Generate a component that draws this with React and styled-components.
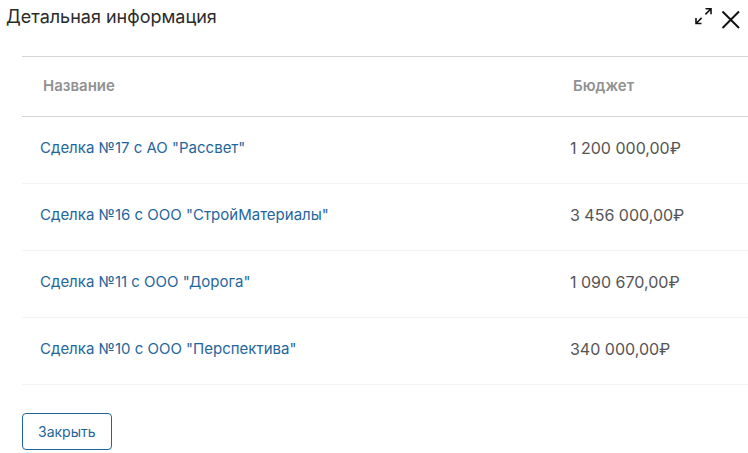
import React from "react";
import styled, { createGlobalStyle } from "styled-components";

const Global = createGlobalStyle`
  * { box-sizing: border-box; }
  body { margin: 0; background: #fff; font-family: Inter, "Liberation Sans", sans-serif; }
`;

const Dialog = styled.section`
  width: 100%;
`;

const Header = styled.header`
  display: flex;
  justify-content: space-between;
  align-items: flex-start;
  padding: 5px 7px 21px 6px;
`;

const Title = styled.h1`
  margin: 0;
  font-size: 18px;
  line-height: 24px;
  font-weight: 400;
  color: #2b2b2b;
`;

const Actions = styled.div`
  display: flex;
  gap: 8px;
`;

const IconButton = styled.button`
  display: flex;
  padding: 0;
  border: 0;
  background: none;
  color: #111;
  cursor: pointer;
`;

const Content = styled.div`
  padding-left: 22px;
`;

const Table = styled.table`
  width: 100%;
  border-collapse: separate;
  border-spacing: 0;
  table-layout: fixed;
`;

const HeadCell = styled.th`
  width: ${(p) => p.$width || "auto"};
  height: 61px;
  padding: 0 21px 2px;
  border-top: 1px solid #d5d5d5;
  border-bottom: 1px solid #d5d5d5;
  text-align: left;
  font-size: 15px;
  font-weight: 600;
  color: #919191;
`;

const Cell = styled.td`
  height: 67px;
  padding: 0 18px 5px;
  border-bottom: 1px solid #f3f3f3;
  font-size: ${(p) => p.$size};
  color: #555;
`;

const DealLink = styled.a`
  color: #1f669c;
  text-decoration: none;
`;

const CloseButton = styled.button`
  margin-top: 28px;
  height: 37px;
  padding: 0 15px;
  border: 1px solid #1f669c;
  border-radius: 4px;
  background: #fff;
  color: #1f669c;
  font: 400 14px Inter, "Liberation Sans", sans-serif;
  cursor: pointer;
`;

const deals = [
  ['Сделка №17 с АО "Рассвет"', "1 200 000,00₽"],
  ['Сделка №16 с ООО "СтройМатериалы"', "3 456 000,00₽"],
  ['Сделка №11 с ООО "Дорога"', "1 090 670,00₽"],
  ['Сделка №10 с ООО "Перспектива"', "340 000,00₽"],
];

export default function App() {
  return (
    <Dialog aria-labelledby="title">
      <Global />
      <Header>
        <Title id="title">Детальная информация</Title>
        <Actions>
          <IconButton type="button" aria-label="Развернуть">
            <svg width="20" height="24" viewBox="0 0 20 24" fill="none" stroke="currentColor" strokeWidth="1.6">
              <path d="M12.5 3.8h5.5v5.5M18 3.8l-5.6 5.6M3 13v5.5h5.5M3 18.5l5.6-5.6" />
            </svg>
          </IconButton>
          <IconButton type="button" aria-label="Закрыть окно">
            <svg width="20" height="30" viewBox="0 0 20 30" fill="none" stroke="currentColor" strokeWidth="2">
              <path d="M1.5 6.5l16.5 16.5M18 6.5L1.5 23" />
            </svg>
          </IconButton>
        </Actions>
      </Header>
      <Content>
        <Table>
          <thead>
            <tr>
              <HeadCell scope="col">Название</HeadCell>
              <HeadCell scope="col" $width="27%">Бюджет</HeadCell>
            </tr>
          </thead>
          <tbody>
            {deals.map(([name, budget]) => (
              <tr key={name}>
                <Cell $size="15px"><DealLink href="#">{name}</DealLink></Cell>
                <Cell $size="16px">{budget}</Cell>
              </tr>
            ))}
          </tbody>
        </Table>
        <CloseButton type="button">Закрыть</CloseButton>
      </Content>
    </Dialog>
  );
}
